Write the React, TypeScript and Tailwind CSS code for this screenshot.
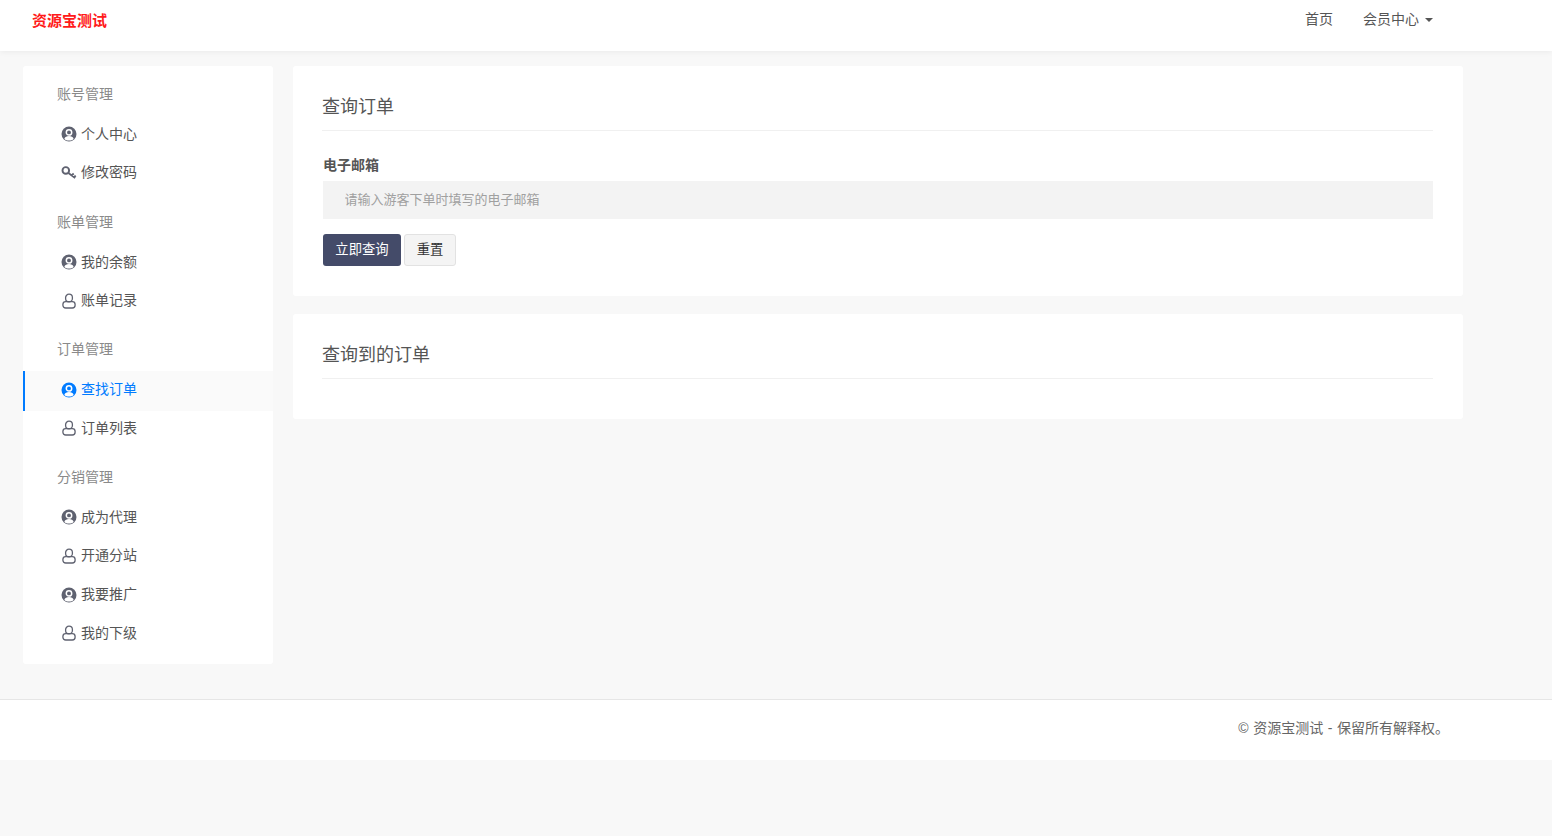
type NavIcon = "solid" | "outline" | "key";

type NavItem = {
  label: string;
  icon: NavIcon;
  active?: boolean;
};

const NAV_GROUPS: { title: string; items: NavItem[] }[] = [
  {
    title: "账号管理",
    items: [
      { label: "个人中心", icon: "solid" },
      { label: "修改密码", icon: "key" },
    ],
  },
  {
    title: "账单管理",
    items: [
      { label: "我的余额", icon: "solid" },
      { label: "账单记录", icon: "outline" },
    ],
  },
  {
    title: "订单管理",
    items: [
      { label: "查找订单", icon: "solid", active: true },
      { label: "订单列表", icon: "outline" },
    ],
  },
  {
    title: "分销管理",
    items: [
      { label: "成为代理", icon: "solid" },
      { label: "开通分站", icon: "outline" },
      { label: "我要推广", icon: "solid" },
      { label: "我的下级", icon: "outline" },
    ],
  },
];

function ItemIcon({ icon }: { icon: NavIcon }) {
  if (icon === "solid") {
    // filled disc, white ring for the head and a white crescent for the shoulders
    return (
      <svg viewBox="0 0 16 16" className="h-[16px] w-[16px] shrink-0">
        <circle cx="8" cy="8" r="7.5" fill="currentColor" />
        <circle cx="8" cy="6.4" r="2.7" fill="none" stroke="#fff" strokeWidth="1.5" />
        <path d="M3.3 12.9C4 10.9 5.8 10 8 10s4 .9 4.7 2.9C11.5 14 9.9 14.5 8 14.5s-3.5-.5-4.7-1.6z" fill="#fff" />
      </svg>
    );
  }
  if (icon === "key") {
    return (
      <svg viewBox="0 0 16 16" className="h-[16px] w-[16px] shrink-0" fill="none" stroke="currentColor">
        <circle cx="4.8" cy="5.4" r="3.3" strokeWidth="1.9" />
        <path d="M7.4 8l6.8 5M10.7 10.4l2-1.9M13 12.2l1.7-1.6" strokeWidth="1.9" />
      </svg>
    );
  }
  return (
    <svg viewBox="0 0 16 16" className="h-[16px] w-[16px] shrink-0" fill="none" stroke="currentColor" strokeWidth="1.3">
      <rect x="4.6" y="1.2" width="6.8" height="7.6" rx="3.4" />
      <rect x="1.9" y="8.7" width="12.2" height="6.3" rx="2.8" />
    </svg>
  );
}

function Sidebar() {
  return (
    <aside className="flex h-[598px] w-[250px] shrink-0 flex-col gap-[15.9px] rounded-[3px] bg-white pt-[14.4px]">
      {NAV_GROUPS.map((group) => (
        <div key={group.title}>
          <h3 className="mb-[6.6px] flex h-[28px] items-center pl-[34px] text-[14px] font-normal text-[#8a8a8a]">
            {group.title}
          </h3>
          {group.items.map((item) => (
            <a
              key={item.label}
              className={
                item.active
                  ? "mt-[0.5px] mb-[-1.83px] flex h-[40px] items-center gap-[5px] border-l-2 border-[#007bff] bg-[#fafafa] pb-[2px] pl-[36px] text-[14px] text-[#007bff]"
                  : "flex h-[38.67px] items-center gap-[5px] pl-[38px] text-[14px] text-[#5f6270]"
              }
            >
              <span className="flex w-[15px] justify-center">
                <ItemIcon icon={item.icon} />
              </span>
              <span className={item.active ? "" : "text-[#555]"}>{item.label}</span>
            </a>
          ))}
        </div>
      ))}
    </aside>
  );
}

function Card({ title, children }: { title: string; children?: React.ReactNode }) {
  return (
    <section className="rounded-[3px] bg-white px-[30px] pt-[26px] pb-[30px]">
      <h2 className="-ml-px border-b border-[#f0f0f0] pb-[8px] text-[18px] leading-[30px] font-normal text-[#555]">
        {title}
      </h2>
      {children}
    </section>
  );
}

export default function App() {
  return (
    <div className="min-h-[836px] bg-[#f8f8f8] font-['Liberation_Sans','Noto_Sans_CJK_SC',sans-serif]">
      {/* Top bar */}
      <header className="flex h-[51px] items-start justify-between bg-white pr-[119px] pl-[32px] shadow-[0_1px_6px_rgba(0,0,0,0.06)]">
        <a className="mt-[11px] text-[15px] leading-[20px] font-bold text-[#ff1a1a]">资源宝测试</a>
        <nav className="mt-[9px] flex items-center gap-[30px] text-[14px] leading-[20px] text-[#555]">
          <a>首页</a>
          <a className="flex items-center gap-[6px]">
            会员中心
            <span className="mt-[1px] h-0 w-0 border-x-[4px] border-t-[4px] border-x-transparent border-t-[#555]" />
          </a>
        </nav>
      </header>

      <div className="flex items-start gap-[20px] pt-[15px] pl-[23px]">
        <Sidebar />
        <main className="flex w-[1170px] flex-col gap-[18px]">
          <Card title="查询订单">
            <label className="mt-[24px] block text-[14px] leading-[20px] font-bold text-[#555]">电子邮箱</label>
            <input
              readOnly
              placeholder="请输入游客下单时填写的电子邮箱"
              className="mt-[6px] block h-[38px] w-full bg-[#f3f3f3] px-[21.5px] pb-[2px] text-[13px] outline-none placeholder:text-[#a0a0a0]"
            />
            <div className="mt-[15px] flex gap-[3px]">
              <button className="h-[32px] w-[78px] rounded-[3px] bg-[#444b69] pb-[1px] text-[13.33px] text-white">
                立即查询
              </button>
              <button className="h-[32px] w-[52px] rounded-[3px] border border-[#e2e2e2] bg-[#f4f4f4] text-[13.33px] text-[#333]">
                重置
              </button>
            </div>
          </Card>
          <Card title="查询到的订单">
            <div className="h-[10px]" />
          </Card>
        </main>
      </div>

      <footer className="mt-[35px] flex h-[61px] items-center justify-end border-t border-[#e6e6e6] bg-white pr-[103px] pb-[4px] text-[14px] [word-spacing:0.7px] text-[#666]">
        © 资源宝测试 - 保留所有解释权。
      </footer>
    </div>
  );
}
